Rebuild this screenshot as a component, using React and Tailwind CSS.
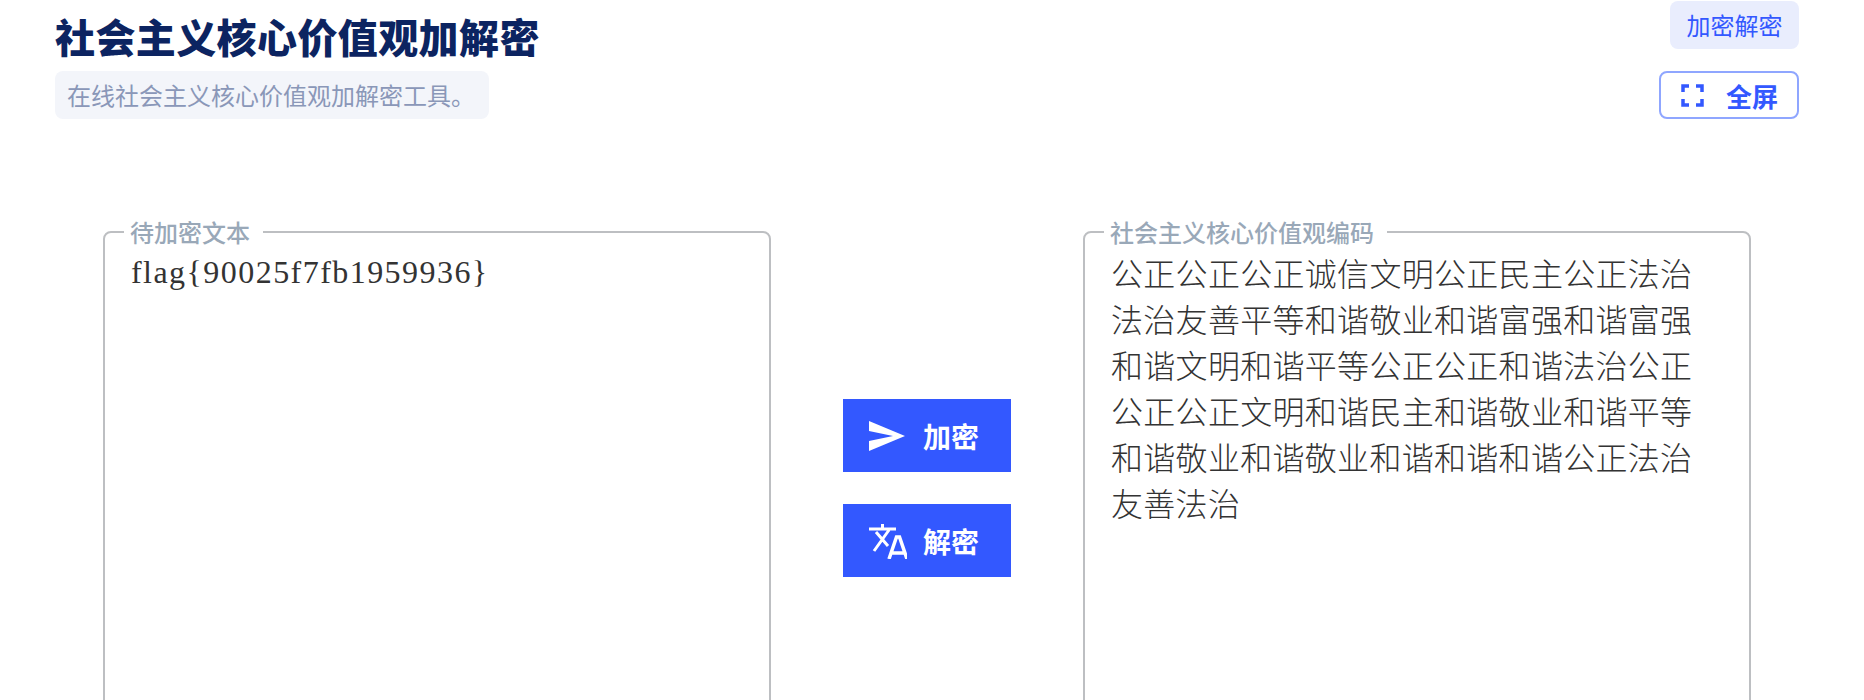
import React from "react";

const cjk = '"Noto Sans CJK SC", "Liberation Sans", sans-serif';

function SendIcon() {
  return (
    <svg width="36" height="30" viewBox="0 0 36 30" fill="white">
      <polygon points="0,0 36,15 0,30 0,20 24,15 0,10" />
    </svg>
  );
}

function TranslateIcon() {
  return (
    <svg width="38" height="36" viewBox="0 0 38 36" fill="none" stroke="white" strokeWidth="3">
      <path d="M0 6H27M13.5 1V6M20 7L5 28M7 9L19 23" />
      <path d="M20 36L27.5 14H30.5L38 36M23 30H35" strokeWidth="3.5" />
    </svg>
  );
}

function FullIcon() {
  return (
    <svg width="23" height="23" viewBox="0 0 23 23" fill="none" stroke="#3358ff" strokeWidth="3.5">
      <path d="M2 8V2H8M15 2H21V8M21 15V21H15M8 21H2V15" />
    </svg>
  );
}

function Box({ label, children }) {
  return (
    <fieldset className="h-[600px] w-[668px] shrink-0 rounded-lg border-2 border-[#bdbfc2] px-[26px]">
      <legend className="ml-[-7px] pl-[6px] pr-[13px] text-[24px] font-medium leading-[28px] text-[#99a8b8]">
        {label}
      </legend>
      {children}
    </fieldset>
  );
}

export default function App() {
  return (
    <div className="h-[700px] w-[1864px] overflow-hidden bg-white" style={{ fontFamily: cjk }}>
      <header className="ml-[55px] mr-[65px] flex justify-between pt-px">
        <div className="flex flex-col items-start">
          <h1 className="mt-[11px] text-[40px] font-black leading-[48px] tracking-[0.4px] text-[#0c2461]">社会主义核心价值观加解密</h1>
          <p className="mt-[11px] flex h-[48px] w-[434px] items-center rounded-lg bg-[#f3f5fa] px-3 text-[24px] text-[#8a97b8]">
            在线社会主义核心价值观加解密工具。
          </p>
        </div>
        <div className="flex flex-col items-end gap-[22px]">
          <span className="flex h-[48px] w-[129px] items-center justify-center rounded-lg bg-[#e9edfd] text-[24px] text-[#3358ff]">加密解密</span>
          <button className="flex h-[48px] w-[140px] items-center gap-[22px] rounded-lg border-2 border-[#8fa6ff] pl-[20px] text-[26px] font-bold text-[#3358ff]">
            <FullIcon />
            全屏
          </button>
        </div>
      </header>

      <main className="mt-[99px] flex pl-[103px]">
        <Box label="待加密文本">
          <textarea
            readOnly
            value="flag{90025f7fb1959936}"
            className="h-[500px] w-full resize-none pt-[3px] text-[32px] leading-[46px] tracking-[1.45px] text-[#333] outline-none"
            style={{ fontFamily: '"Liberation Serif", "Noto Sans CJK SC", serif' }}
          />
        </Box>

        <div className="flex w-[312px] shrink-0 flex-col items-center gap-[32px] pt-[181px]">
          <button className="flex h-[73px] w-[168px] items-center gap-[18px] bg-[#3358ff] pl-[26px] text-[28px] font-bold text-white">
            <SendIcon />
            加密
          </button>
          <button className="flex h-[73px] w-[168px] items-center gap-[16px] bg-[#3358ff] pl-[26px] text-[28px] font-bold text-white">
            <TranslateIcon />
            解密
          </button>
        </div>

        <Box label="社会主义核心价值观编码">
          <textarea
            readOnly
            value="公正公正公正诚信文明公正民主公正法治法治友善平等和谐敬业和谐富强和谐富强和谐文明和谐平等公正公正和谐法治公正公正公正文明和谐民主和谐敬业和谐平等和谐敬业和谐敬业和谐和谐和谐公正法治友善法治"
            className="h-[500px] w-[590px] resize-none pt-[3px] text-[32px] font-light leading-[46px] tracking-[0.3px] text-[#333] outline-none"
          />
        </Box>
      </main>
    </div>
  );
}
